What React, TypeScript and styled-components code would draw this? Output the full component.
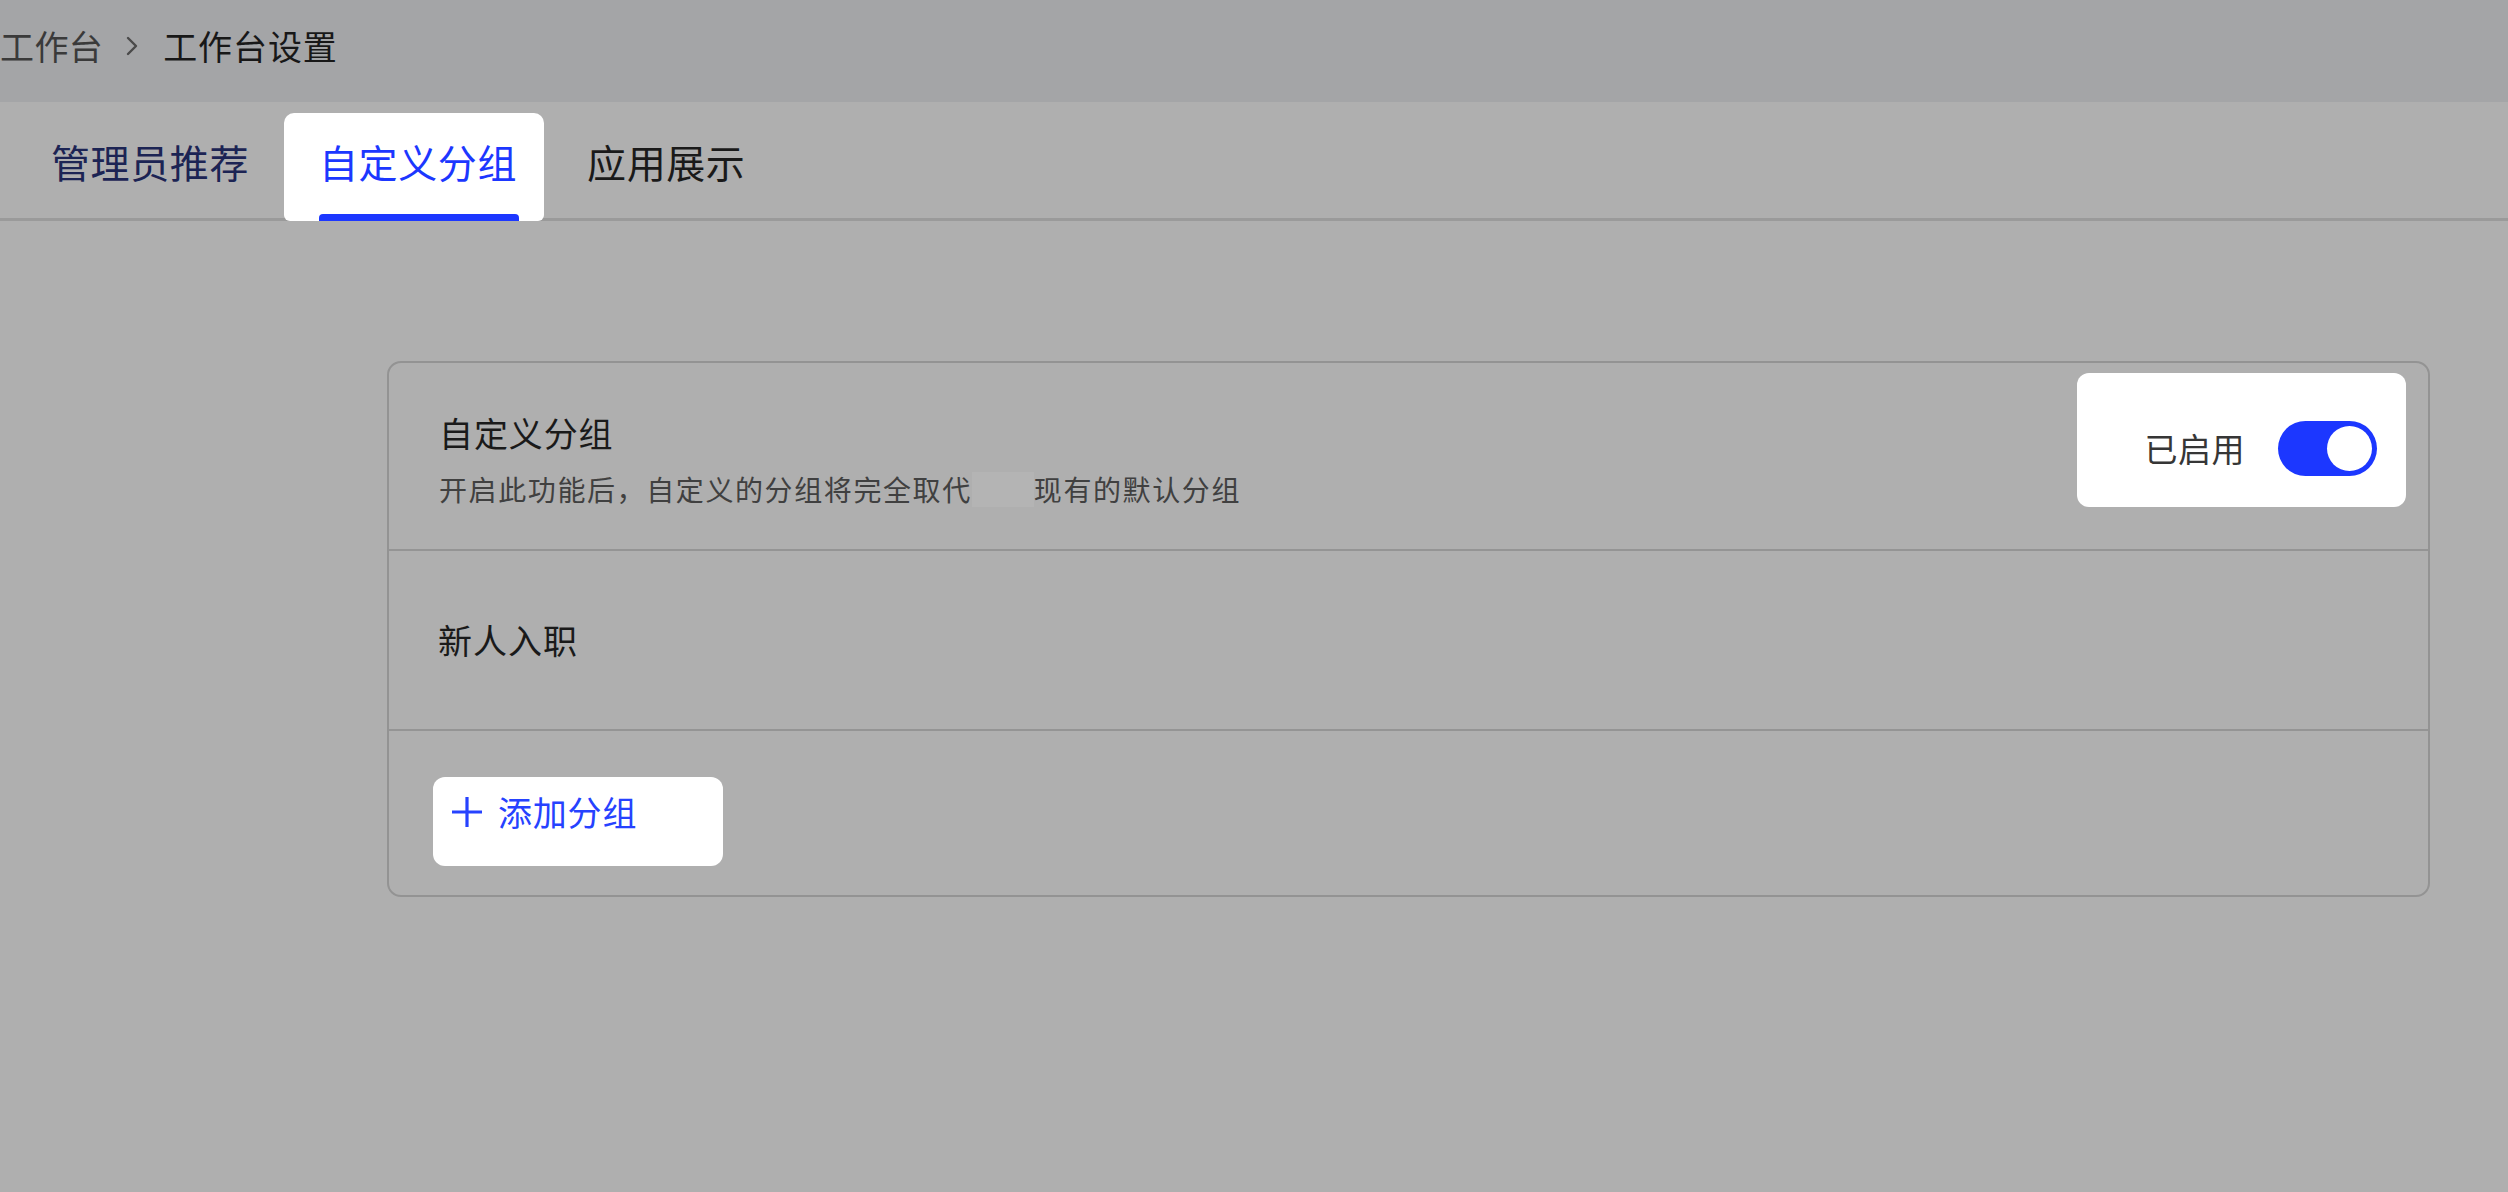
import React from 'react'
import styled, { createGlobalStyle } from 'styled-components'

const GlobalStyle = createGlobalStyle`
  html, body {
    margin: 0;
    padding: 0;
    background: #afafaf;
  }
  body {
    width: 2508px;
    height: 1192px;
    overflow: hidden;
    font-family: 'Noto Sans CJK SC', 'Noto Sans', sans-serif;
  }
  * {
    box-sizing: border-box;
  }
`

const BLUE = '#1c37ff'

const Page = styled.div`
  width: 2508px;
  height: 1192px;
  background: #afafaf;
`

const TopBar = styled.header`
  height: 102px;
  background: #a4a5a7;
  display: flex;
  align-items: center;
  padding-bottom: 10px;
  font-size: 34px;
  line-height: 44px;
`

const Crumb = styled.span<{ $current?: boolean }>`
  color: ${(p) => (p.$current ? '#181818' : '#3a3a3a')};
  letter-spacing: ${(p) => (p.$current ? '0.9px' : '0.4px')};
`

const Chevron = styled.svg`
  width: 18px;
  height: 22px;
  margin: 0 22px 0 20px;
`

const TabBar = styled.nav`
  display: flex;
  align-items: flex-end;
  gap: 8px;
  height: 119px;
  padding: 11px 0 0 16px;
  border-bottom: 3px solid #9a9a9a;
`

const Tab = styled.div<{ $active?: boolean; $tone?: 'navy' | 'dark' }>`
  position: relative;
  height: 108px;
  margin-bottom: -3px;
  padding: 0 27px 12px 35px;
  display: flex;
  align-items: center;
  font-size: 39px;
  line-height: 50px;
  letter-spacing: 0.6px;
  border-radius: 10px 10px 6px 6px;
  background: ${(p) => (p.$active ? '#ffffff' : 'transparent')};
  color: ${(p) => (p.$active ? BLUE : p.$tone === 'navy' ? '#1c2454' : '#1a1a1a')};

  ${(p) =>
    p.$active &&
    `
    &::after {
      content: '';
      position: absolute;
      left: 35px;
      right: 25px;
      bottom: 0;
      height: 7px;
      border-radius: 4px 4px 0 0;
      background: ${BLUE};
    }
  `}
`

const Content = styled.main`
  padding: 140px 0 0 387px;
`

const Card = styled.section`
  width: 2043px;
  border: 2px solid #939393;
  border-radius: 14px;
`

const Row = styled.div<{ $height: number }>`
  height: ${(p) => p.$height}px;
  & + & {
    border-top: 2px solid #949494;
  }
`

const HeadRow = styled(Row)`
  display: flex;
  justify-content: space-between;
  align-items: flex-start;
  padding: 10px 22px 0 50px;
`

const TextBlock = styled.div`
  margin-top: 38px;
`

const Title = styled.div`
  font-size: 34px;
  line-height: 44px;
  letter-spacing: 0.9px;
  color: #1a1a1a;
`

const Desc = styled.div`
  margin-top: 14px;
  font-size: 28px;
  line-height: 40px;
  letter-spacing: 1.6px;
  color: #404040;
  display: flex;
  align-items: center;
`

const Masked = styled.span`
  display: inline-block;
  width: 62px;
  height: 35px;
  background: #b4b4b4;
`

const SwitchPanel = styled.div`
  width: 329px;
  height: 134px;
  background: #ffffff;
  border-radius: 12px;
  display: flex;
  align-items: center;
  justify-content: flex-end;
  gap: 33px;
  padding: 16px 29px 0 0;
`

const SwitchLabel = styled.span`
  font-size: 33px;
  line-height: 44px;
  letter-spacing: 0.5px;
  color: #363636;
`

const Switch = styled.div<{ $on: boolean }>`
  width: 99px;
  height: 55px;
  border-radius: 28px;
  padding: 5px;
  display: flex;
  justify-content: ${(p) => (p.$on ? 'flex-end' : 'flex-start')};
  background: ${(p) => (p.$on ? BLUE : '#c9c9c9')};
`

const Knob = styled.span`
  width: 45px;
  height: 45px;
  border-radius: 50%;
  background: #ffffff;
`

const GroupRow = styled(Row)`
  display: flex;
  align-items: center;
  padding-left: 49px;
`

const GroupName = styled.span`
  font-size: 34px;
  line-height: 44px;
  letter-spacing: 1px;
  color: #1a1a1a;
`

const FooterRow = styled(Row)`
  padding: 46px 0 0 44px;
`

const AddButton = styled.button`
  width: 290px;
  height: 89px;
  border: 0;
  border-radius: 12px;
  background: #ffffff;
  display: flex;
  align-items: center;
  gap: 14px;
  padding: 0 0 20px 17px;
  font-family: inherit;
  font-size: 34px;
  line-height: 44px;
  letter-spacing: 0.8px;
  color: #2642ff;
  cursor: pointer;
`

const Plus = styled.svg`
  width: 34px;
  height: 34px;
  flex: none;
`

const App = () => {
  return (
    <Page>
      <GlobalStyle />
      <TopBar>
        <Crumb>工作台</Crumb>
        <Chevron viewBox="0 0 18 22" fill="none">
          <path d="M5 3l8 8-8 8" stroke="#4a4a4a" strokeWidth="2.4" strokeLinecap="round" strokeLinejoin="round" />
        </Chevron>
        <Crumb $current>工作台设置</Crumb>
      </TopBar>

      <TabBar>
        <Tab $tone="navy">管理员推荐</Tab>
        <Tab $active>自定义分组</Tab>
        <Tab $tone="dark">应用展示</Tab>
      </TabBar>

      <Content>
        <Card>
          <HeadRow $height={186}>
            <TextBlock>
              <Title>自定义分组</Title>
              <Desc>
                开启此功能后，自定义的分组将完全取代
                <Masked />
                现有的默认分组
              </Desc>
            </TextBlock>
            <SwitchPanel>
              <SwitchLabel>已启用</SwitchLabel>
              <Switch $on>
                <Knob />
              </Switch>
            </SwitchPanel>
          </HeadRow>

          <GroupRow $height={180}>
            <GroupName>新人入职</GroupName>
          </GroupRow>

          <FooterRow $height={166}>
            <AddButton type="button">
              <Plus viewBox="0 0 34 34" fill="none">
                <path d="M17 2v30M2 17h30" stroke="#2642ff" strokeWidth="3.2" />
              </Plus>
              添加分组
            </AddButton>
          </FooterRow>
        </Card>
      </Content>
    </Page>
  )
}

export default App
